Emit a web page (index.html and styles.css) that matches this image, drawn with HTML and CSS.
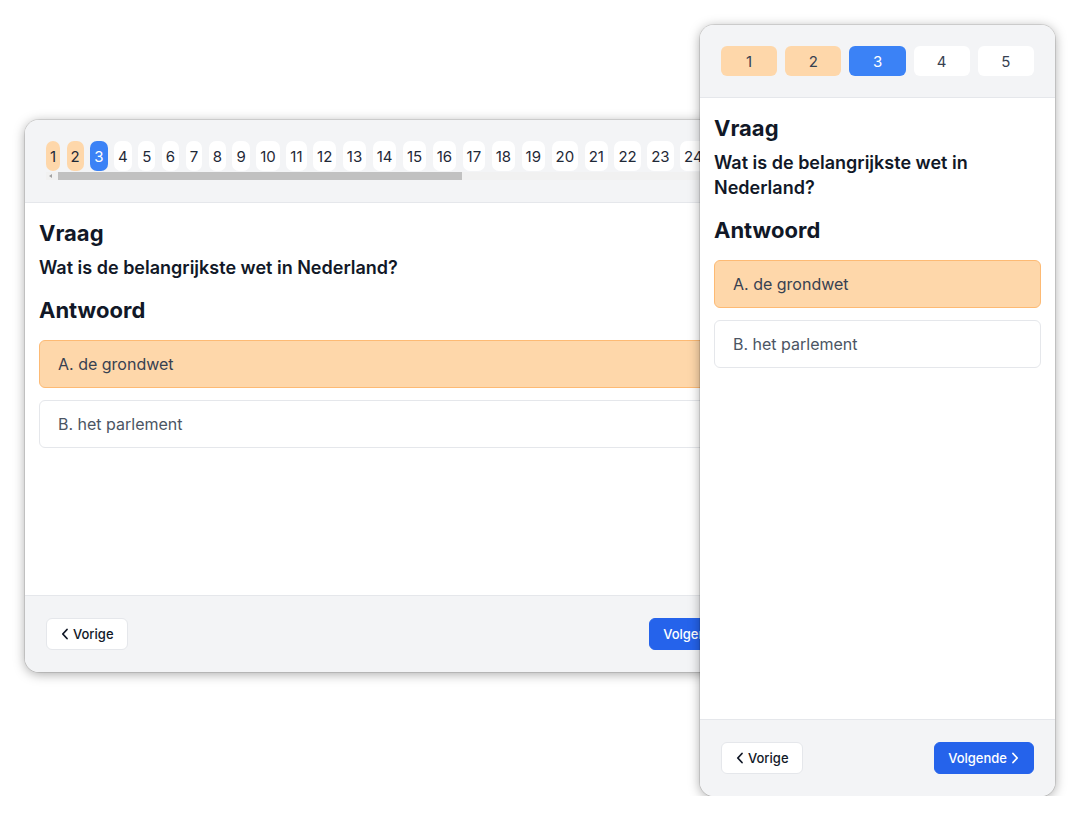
FILE: index.html
```html
<!DOCTYPE html>
<html lang="nl">
<head>
  <meta charset="UTF-8" />
  <meta name="viewport" content="width=device-width, initial-scale=1.0" />
  <title>Oefenexamen</title>
  <link rel="stylesheet" href="styles.css">
</head>
<body>
<div class="stage">

  <!-- breed scherm -->
  <section class="card card-wide">
    <div class="card-head">
      <div class="pages pages-scroll">
        <button class="page done">1</button>
        <button class="page done">2</button>
        <button class="page current">3</button>
        <button class="page">4</button>
        <button class="page">5</button>
        <button class="page">6</button>
        <button class="page">7</button>
        <button class="page">8</button>
        <button class="page">9</button>
        <button class="page">10</button>
        <button class="page">11</button>
        <button class="page">12</button>
        <button class="page">13</button>
        <button class="page">14</button>
        <button class="page">15</button>
        <button class="page">16</button>
        <button class="page">17</button>
        <button class="page">18</button>
        <button class="page">19</button>
        <button class="page">20</button>
        <button class="page">21</button>
        <button class="page">22</button>
        <button class="page">23</button>
        <button class="page">24</button>
      </div>
      <div class="scrollbar">
        <span class="scroll-arrow"></span>
        <span class="scroll-thumb"></span>
      </div>
    </div>
    <div class="card-body">
      <h2>Vraag</h2>
      <p class="question">Wat is de belangrijkste wet in Nederland?</p>
      <h2>Antwoord</h2>
      <div class="option selected">A. de grondwet</div>
      <div class="option">B. het parlement</div>
    </div>
    <div class="card-foot">
      <button class="nav-btn">
        <svg width="8" height="12" viewBox="0 0 8 12"><path d="M6 1.5L1.8 6L6 10.5" /></svg>
        Vorige
      </button>
      <button class="nav-btn primary">
        Volgende
        <svg width="8" height="12" viewBox="0 0 8 12"><path d="M2 1.5L6.2 6L2 10.5" /></svg>
      </button>
    </div>
  </section>

  <!-- mobiel scherm -->
  <section class="card card-narrow">
    <div class="card-head">
      <div class="pages pages-fill">
        <button class="page done">1</button>
        <button class="page done">2</button>
        <button class="page current">3</button>
        <button class="page">4</button>
        <button class="page">5</button>
      </div>
    </div>
    <div class="card-body">
      <h2>Vraag</h2>
      <p class="question">Wat is de belangrijkste wet in Nederland?</p>
      <h2>Antwoord</h2>
      <div class="option selected">A. de grondwet</div>
      <div class="option">B. het parlement</div>
    </div>
    <div class="card-foot">
      <button class="nav-btn">
        <svg width="8" height="12" viewBox="0 0 8 12"><path d="M6 1.5L1.8 6L6 10.5" /></svg>
        Vorige
      </button>
      <button class="nav-btn primary">
        Volgende
        <svg width="8" height="12" viewBox="0 0 8 12"><path d="M2 1.5L6.2 6L2 10.5" /></svg>
      </button>
    </div>
  </section>

</div>
</body>
</html>
```

FILE: styles.css
```css
body {
  margin: 0;
  padding: 0;
  font-family: 'Inter', 'Noto Sans', sans-serif;
  background: #fff;
  color: #111827;
}
.stage {
  display: grid;
  grid-template-columns: 25px 675px 70px 285px;
  grid-template-rows: 25px 95px 552px 124px;
}
.card {
  display: flex;
  flex-direction: column;
  background: white;
  border-radius: 14px;
  overflow: hidden;
  box-shadow: 0 0 0 1px rgba(0,0,0,0.1), 0 2px 12px rgba(0,0,0,0.35);
}
.card-wide {
  grid-column: 2 / 4;
  grid-row: 3;
}
.card-narrow {
  grid-column: 3 / 5;
  grid-row: 2 / 5;
  z-index: 1;
}
.card-head {
  background: #f3f4f6;
  padding: 21px 21px 21px;
  border-bottom: 1px solid #e5e7eb;
}
.card-wide .card-head {
  padding-bottom: 22px;
}
.pages {
  display: flex;
  gap: 6.5px;
}
.pages-scroll {
  overflow: hidden;
}
.page {
  flex: none;
  height: 30px;
  padding: 0 4px;
  border: none;
  border-radius: 7px;
  background: white;
  color: #1f2937;
  font-family: inherit;
  font-size: 15px;
}
.pages-fill {
  gap: 8px;
}
.pages-fill .page {
  flex: 1;
  border-radius: 6px;
  color: #374151;
}
.page.done {
  background: #fed7aa;
}
.page.current {
  background: #3b82f6;
  color: white;
}
.scrollbar {
  display: flex;
  align-items: center;
  height: 8px;
  margin-top: 1px;
  background: #f1f1f1;
}
.scroll-arrow {
  width: 0;
  height: 0;
  margin: 0 6px 0 3px;
  border-top: 2px solid transparent;
  border-bottom: 2px solid transparent;
  border-right: 3px solid #a3a3a3;
}
.scroll-thumb {
  width: 404px;
  height: 8px;
  background: #c1c1c1;
}
.card-body {
  flex: 1;
  padding: 16px 14px;
}
h2 {
  margin: 0;
  font-size: 22px;
  line-height: 28px;
  font-weight: 700;
  color: #111827;
}
.question {
  margin: 8px 0 16px;
  font-size: 18px;
  line-height: 25px;
  font-weight: 600;
  color: #111827;
}
.option {
  margin-top: 12px;
  padding: 11px 18px;
  border: 1px solid #e5e7eb;
  border-radius: 6px;
  font-size: 16px;
  line-height: 24px;
  color: #4b5563;
}
h2 + .option {
  margin-top: 16px;
}
.option.selected {
  background: #fed7aa;
  border-color: #fdba74;
  color: #374151;
}
.card-foot {
  display: flex;
  justify-content: space-between;
  background: #f3f4f6;
  border-top: 1px solid #e5e7eb;
  padding: 22px 21px;
}
.nav-btn {
  display: flex;
  align-items: center;
  gap: 4px;
  height: 32px;
  padding: 0 13px 0 14px;
  border: 1px solid #e5e7eb;
  border-radius: 6px;
  background: white;
  color: #111827;
  font-family: inherit;
  font-size: 13px;
  font-weight: 500;
}
.nav-btn svg {
  fill: none;
  stroke: currentColor;
  stroke-width: 1.8;
  stroke-linecap: round;
  stroke-linejoin: round;
}
.nav-btn.primary {
  padding: 0 14px 0 13px;
  background: #2563eb;
  border-color: #2563eb;
  color: white;
}
```
